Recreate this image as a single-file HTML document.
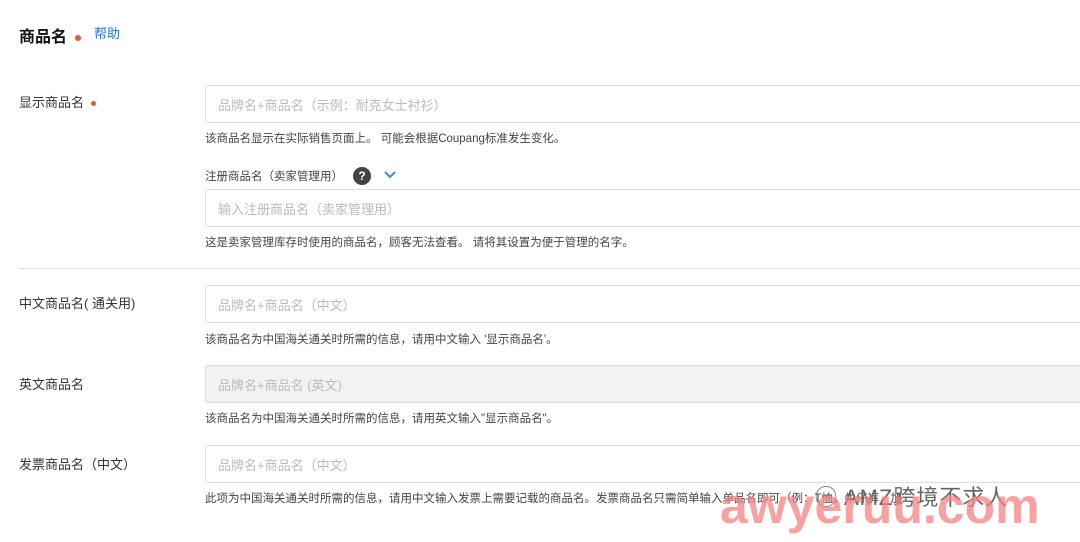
<html><head><style>
body{margin:0;width:1080px;height:542px;overflow:hidden;background:#fff;font-family:"Liberation Sans","Noto Sans CJK SC",sans-serif;position:relative;color:#333}
.a{position:absolute;white-space:nowrap}
.in{position:absolute;left:205px;width:900px;height:38px;border:1px solid #ddd;border-radius:3px;box-sizing:border-box;font-size:13px;color:#bbb;padding:9px 12px;}
.h{position:absolute;left:205px;font-size:11.5px;color:#444;white-space:nowrap}
.l{position:absolute;left:19px;font-size:13px;color:#333}
.dot{display:inline-block;width:5px;height:5px;border-radius:50%;background:#e53;margin-left:7px;vertical-align:middle}
</style></head><body>
<div class="a" style="left:19px;top:23px;font-size:16px;font-weight:bold;color:#111">商品名<span class="dot" style="width:6px;height:6px;margin-left:8px"></span></div>
<div class="a" style="left:94px;top:23px;font-size:13px;color:#1a7ad6">帮助</div>
<div class="l" style="top:92px">显示商品名<span class="dot"></span></div>
<div class="in" style="top:85px">品牌名+商品名（示例：耐克女士衬衫）</div>
<div class="h" style="top:130px">该商品名显示在实际销售页面上。 可能会根据Coupang标准发生变化。</div>
<div class="a" style="left:205px;top:168px;font-size:11.5px;color:#444">注册商品名（卖家管理用）</div>
<div class="a" style="left:353px;top:167px;width:18px;height:18px;border-radius:50%;background:#444;color:#fff;font-size:12px;font-weight:bold;text-align:center;line-height:18px">?</div>
<svg class="a" style="left:383px;top:170px" width="14" height="10"><path d="M2 2l5 5 5-5" stroke="#3a8ee6" stroke-width="2" fill="none"/></svg>
<div class="in" style="top:189px">输入注册商品名（卖家管理用）</div>
<div class="h" style="top:234px">这是卖家管理库存时使用的商品名，顾客无法查看。 请将其设置为便于管理的名字。</div>
<div class="a" style="left:19px;top:268px;width:1061px;height:1px;background:#ddd"></div>
<div class="l" style="top:293px">中文商品名( 通关用)</div>
<div class="in" style="top:285px">品牌名+商品名（中文）</div>
<div class="h" style="top:331px">该商品名为中国海关通关时所需的信息，请用中文输入 '显示商品名'。</div>
<div class="l" style="top:374px">英文商品名</div>
<div class="in" style="top:365px;background:#f2f2f2">品牌名+商品名 (英文)</div>
<div class="h" style="top:410px">该商品名为中国海关通关时所需的信息，请用英文输入"显示商品名"。</div>
<div class="l" style="top:454px">发票商品名（中文）</div>
<div class="in" style="top:445px">品牌名+商品名（中文）</div>
<div class="h" style="top:490px">此项为中国海关通关时所需的信息，请用中文输入发票上需要记载的商品名。发票商品名只需简单输入单品名即可（例：T恤，牛仔裤，加...</div>
<div class="a" style="left:815px;top:480px;font-size:22px;color:#666;letter-spacing:1px">◯ AMZ跨境不求人</div>
<div class="a" style="left:720px;top:477px;font-size:50px;font-weight:bold;color:rgba(245,130,130,0.75);letter-spacing:0px">awyeruu.com</div>
</body></html>
